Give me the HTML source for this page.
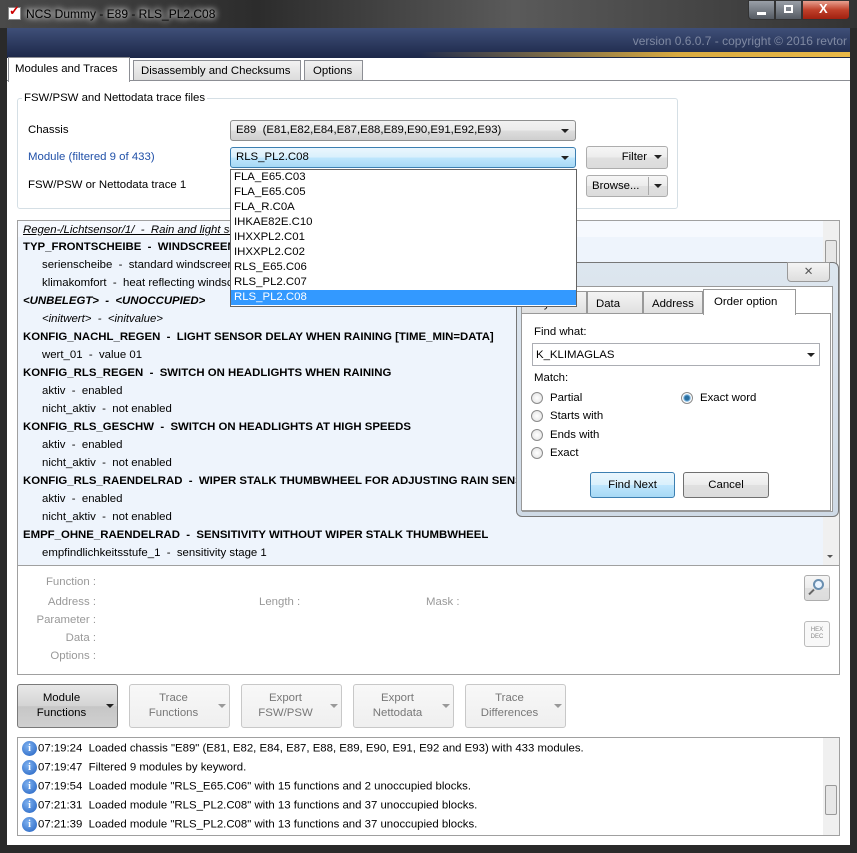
<!DOCTYPE html>
<html><head><meta charset="utf-8"><style>
*{box-sizing:border-box;margin:0;padding:0}
body{width:857px;height:853px;overflow:hidden;background:#2a2a2a;font-family:"Liberation Sans",sans-serif;font-size:11.4px;color:#000;position:relative}
.a{position:absolute}
.t{position:absolute;white-space:nowrap;line-height:14px}
.combo{position:absolute;border:1px solid #8e8f8f;border-radius:3px;background:linear-gradient(#f2f2f2,#ebebeb 50%,#dddddd 51%,#cfcfcf);padding:3px 5px;line-height:12px}
.arr{position:absolute;width:0;height:0;border-left:4px solid transparent;border-right:4px solid transparent;border-top:4px solid #222}
.btn{position:absolute;border:1px solid #adadad;border-radius:3px;background:linear-gradient(#f6f6f6,#ececec 50%,#e0e0e0 51%,#dcdcdc);text-align:center}
.bb{position:absolute;border:1px solid #c8c8c8;border-radius:3px;background:linear-gradient(#f8f8f8,#efefef);color:#777;text-align:center;line-height:15px;padding-top:6px}
.row{position:absolute;left:23px;white-space:nowrap;line-height:14px}
.b{font-weight:bold}
.in{left:42px}
.lbl{position:absolute;color:#999;text-align:right;width:80px;left:16px}
.li{position:absolute;left:4px;line-height:15px}
.rad{position:absolute;width:12px;height:12px;border-radius:50%;border:1px solid #8b8b8b;background:radial-gradient(#fff,#e0e0e0)}
.log{position:absolute;left:22px;white-space:nowrap;line-height:14px}
.ic{display:inline-block;width:15px;height:15px;border-radius:50%;background:radial-gradient(circle at 40% 35%,#7fb2f0,#1f5fc0);color:#fff;font-size:10px;font-weight:bold;text-align:center;line-height:15px;vertical-align:middle;margin-right:1px;font-family:"Liberation Serif",serif}
</style></head><body>
<div class="a" style="left:0;top:0;width:857px;height:28px;background:linear-gradient(90deg,#4a4a4a,#2c2c2c 30%,#5a5a5a 60%,#333)"></div>
<div class="a" style="left:8px;top:7px;width:13px;height:13px;background:#fff;border:1px solid #888"></div>
<div class="t" style="left:9px;top:4px;color:#c00;font-weight:bold;font-size:13px">✓</div>
<div class="t" style="left:26px;top:7px;color:#000;text-shadow:0 0 6px #fff,0 0 8px #fff;font-size:12px">NCS Dummy - E89 - RLS_PL2.C08</div>
<div class="a" style="left:748px;top:0;width:27px;height:20px;border:1px solid #333;border-radius:0 0 0 4px;background:linear-gradient(#9aa0a8,#555b63)"></div>
<div class="a" style="left:757px;top:12px;width:9px;height:3px;background:#fff"></div>
<div class="a" style="left:775px;top:0;width:27px;height:20px;border:1px solid #333;background:linear-gradient(#9aa0a8,#555b63)"></div>
<div class="a" style="left:784px;top:5px;width:9px;height:8px;border:2px solid #fff"></div>
<div class="a" style="left:802px;top:0;width:48px;height:20px;border:1px solid #333;border-radius:0 0 4px 0;background:linear-gradient(#e8a090,#c0402a 50%,#a02010)"></div>
<div class="t" style="left:819px;top:2px;color:#fff;font-weight:bold;font-size:13px">X</div>
<div class="a" style="left:7px;top:28px;width:843px;height:817px;background:#fff"></div>
<div class="a" style="left:7px;top:28px;width:843px;height:30px;background:linear-gradient(#3f4f78,#1c2748)"></div>
<div class="a" style="left:420px;top:52px;width:430px;height:5px;background:linear-gradient(90deg,rgba(200,160,60,0),#d8aa40 60%,#e8b848)"></div>
<div class="t" style="right:10px;top:34px;color:#7f89a2;font-size:12px">version 0.6.0.7 - copyright © 2016 revtor</div>
<div class="a" style="left:7px;top:80px;width:843px;height:1px;background:#8c8e94"></div>
<div class="a" style="left:133px;top:60px;width:168px;height:21px;border:1px solid #8c8e94;background:linear-gradient(#f2f2f2,#dcdcdc)"></div>
<div class="t" style="left:141px;top:64px">Disassembly and Checksums</div>
<div class="a" style="left:304px;top:60px;width:59px;height:21px;border:1px solid #8c8e94;background:linear-gradient(#f2f2f2,#dcdcdc)"></div>
<div class="t" style="left:313px;top:64px">Options</div>
<div class="a" style="left:8px;top:57px;width:122px;height:25px;border:1px solid #8c8e94;border-bottom:none;background:#fff"></div>
<div class="t" style="left:15px;top:62px">Modules and Traces</div>
<div class="a" style="left:17px;top:98px;width:661px;height:111px;border:1px solid #d5dfe5;border-radius:3px"></div>
<div class="t" style="left:22px;top:91px;background:#fff;padding:0 2px">FSW/PSW and Nettodata trace files</div>
<div class="t" style="left:28px;top:123px">Chassis</div>
<div class="combo" style="left:230px;top:120px;width:346px;height:21px">E89&nbsp; (E81,E82,E84,E87,E88,E89,E90,E91,E92,E93)</div>
<div class="arr" style="left:561px;top:129px"></div>
<div class="t" style="left:28px;top:150px;color:#2050a8">Module (filtered 9 of 433)</div>
<div class="combo" style="left:230px;top:147px;width:346px;height:21px;border-color:#3c7fb1;background:linear-gradient(#eaf6fd,#d9f0fc 50%,#bee6fd 51%,#a7d9f5)">RLS_PL2.C08</div>
<div class="arr" style="left:561px;top:156px"></div>
<div class="btn" style="left:586px;top:146px;width:82px;height:23px;line-height:21px;padding-right:20px;text-align:right">Filter</div>
<div class="arr" style="left:654px;top:155px"></div>
<div class="t" style="left:28px;top:178px">FSW/PSW or Nettodata trace 1</div>
<div class="btn" style="left:586px;top:175px;width:82px;height:22px;line-height:20px;text-align:left;padding-left:5px">Browse...</div>
<div class="a" style="left:648px;top:177px;width:1px;height:18px;background:#aaa"></div>
<div class="arr" style="left:654px;top:184px"></div>
<div class="a" style="left:17px;top:220px;width:823px;height:346px;border:1px solid #a0a0a0;background:#eef4fc"></div>
<div class="a" style="left:18px;top:221px;width:805px;height:16px;background:#f6f9fe"></div>
<div class="row" style="top:223px;font-style:italic;text-decoration:underline">Regen-/Lichtsensor/1/&nbsp; -&nbsp; Rain and light sensor</div>
<div class="row b" style="top:240px">TYP_FRONTSCHEIBE&nbsp; -&nbsp; WINDSCREEN TYPE</div>
<div class="row in" style="top:258px">serienscheibe&nbsp; -&nbsp; standard windscreen</div>
<div class="row in" style="top:276px">klimakomfort&nbsp; -&nbsp; heat reflecting windscreen</div>
<div class="row b" style="top:294px;font-style:italic">&lt;UNBELEGT&gt;&nbsp; -&nbsp; &lt;UNOCCUPIED&gt;</div>
<div class="row in" style="top:312px;font-style:italic">&lt;initwert&gt;&nbsp; -&nbsp; &lt;initvalue&gt;</div>
<div class="row b" style="top:330px">KONFIG_NACHL_REGEN&nbsp; -&nbsp; LIGHT SENSOR DELAY WHEN RAINING [TIME_MIN=DATA]</div>
<div class="row in" style="top:348px">wert_01&nbsp; -&nbsp; value 01</div>
<div class="row b" style="top:366px">KONFIG_RLS_REGEN&nbsp; -&nbsp; SWITCH ON HEADLIGHTS WHEN RAINING</div>
<div class="row in" style="top:384px">aktiv&nbsp; -&nbsp; enabled</div>
<div class="row in" style="top:402px">nicht_aktiv&nbsp; -&nbsp; not enabled</div>
<div class="row b" style="top:420px">KONFIG_RLS_GESCHW&nbsp; -&nbsp; SWITCH ON HEADLIGHTS AT HIGH SPEEDS</div>
<div class="row in" style="top:438px">aktiv&nbsp; -&nbsp; enabled</div>
<div class="row in" style="top:456px">nicht_aktiv&nbsp; -&nbsp; not enabled</div>
<div class="row b" style="top:474px">KONFIG_RLS_RAENDELRAD&nbsp; -&nbsp; WIPER STALK THUMBWHEEL FOR ADJUSTING RAIN SENSITIVITY</div>
<div class="row in" style="top:492px">aktiv&nbsp; -&nbsp; enabled</div>
<div class="row in" style="top:510px">nicht_aktiv&nbsp; -&nbsp; not enabled</div>
<div class="row b" style="top:528px">EMPF_OHNE_RAENDELRAD&nbsp; -&nbsp; SENSITIVITY WITHOUT WIPER STALK THUMBWHEEL</div>
<div class="row in" style="top:546px">empfindlichkeitsstufe_1&nbsp; -&nbsp; sensitivity stage 1</div>
<div class="a" style="left:823px;top:221px;width:16px;height:344px;background:#f0f0f0"></div>
<div class="a" style="left:825px;top:240px;width:12px;height:30px;border:1px solid #999;border-radius:2px;background:#e6e6e6"></div>
<div class="arr" style="left:827px;top:555px;border-width:3px 3px 0;border-top-color:#555"></div>
<div class="a" style="left:17px;top:565px;width:823px;height:110px;border:1px solid #a0a0a0;background:#fff"></div>
<div class="lbl t" style="top:575px">Function :</div>
<div class="lbl t" style="top:595px">Address :</div>
<div class="lbl t" style="top:613px">Parameter :</div>
<div class="lbl t" style="top:631px">Data :</div>
<div class="lbl t" style="top:649px">Options :</div>
<div class="t" style="left:259px;top:595px;color:#999">Length :</div>
<div class="t" style="left:426px;top:595px;color:#999">Mask :</div>
<div class="btn" style="left:804px;top:575px;width:26px;height:26px"></div>
<div class="a" style="left:813px;top:579px;width:11px;height:11px;border:2px solid #6a8fb0;border-radius:50%;background:#eaf4ff"></div>
<div class="a" style="left:808px;top:591px;width:7px;height:2px;background:#666;transform:rotate(-45deg)"></div>
<div class="a" style="left:804px;top:621px;width:26px;height:26px;border:1px solid #bbb;border-radius:3px;background:#f8f8f8;font-size:6px;color:#888;text-align:center;line-height:7px;padding-top:5px">HEX<br>DEC</div>
<div class="a" style="left:17px;top:684px;width:101px;height:44px;border:1px solid #7a7a7a;border-radius:3px;background:linear-gradient(#e8e8e8,#d4d4d4 50%,#c6c6c6 51%,#d0d0d0);text-align:center;line-height:15px;padding-top:6px;padding-right:12px">Module<br>Functions</div>
<div class="arr" style="left:106px;top:704px"></div>
<div class="bb" style="left:129px;top:684px;width:101px;height:44px;padding-right:12px">Trace<br>Functions</div>
<div class="arr" style="left:218px;top:704px;border-top-color:#999"></div>
<div class="bb" style="left:241px;top:684px;width:101px;height:44px;padding-right:12px">Export<br>FSW/PSW</div>
<div class="arr" style="left:330px;top:704px;border-top-color:#999"></div>
<div class="bb" style="left:353px;top:684px;width:101px;height:44px;padding-right:12px">Export<br>Nettodata</div>
<div class="arr" style="left:442px;top:704px;border-top-color:#999"></div>
<div class="bb" style="left:465px;top:684px;width:101px;height:44px;padding-right:12px">Trace<br>Differences</div>
<div class="arr" style="left:554px;top:704px;border-top-color:#999"></div>
<div class="a" style="left:17px;top:737px;width:823px;height:99px;border:1px solid #a0a0a0;background:#fff"></div>
<div class="log" style="top:741px"><span class="ic">i</span>07:19:24&nbsp; Loaded chassis "E89" (E81, E82, E84, E87, E88, E89, E90, E91, E92 and E93) with 433 modules.</div>
<div class="log" style="top:760px"><span class="ic">i</span>07:19:47&nbsp; Filtered 9 modules by keyword.</div>
<div class="log" style="top:779px"><span class="ic">i</span>07:19:54&nbsp; Loaded module "RLS_E65.C06" with 15 functions and 2 unoccupied blocks.</div>
<div class="log" style="top:798px"><span class="ic">i</span>07:21:31&nbsp; Loaded module "RLS_PL2.C08" with 13 functions and 37 unoccupied blocks.</div>
<div class="log" style="top:817px"><span class="ic">i</span>07:21:39&nbsp; Loaded module "RLS_PL2.C08" with 13 functions and 37 unoccupied blocks.</div>
<div class="a" style="left:823px;top:738px;width:16px;height:97px;background:#f0f0f0"></div>
<div class="a" style="left:825px;top:785px;width:12px;height:30px;border:1px solid #999;border-radius:2px;background:#e6e6e6"></div>
<div class="a" style="left:516px;top:262px;width:323px;height:255px;border:1px solid #777;border-radius:6px;background:linear-gradient(#dde6ef,#cfdae6);"></div>
<div class="a" style="left:787px;top:262px;width:43px;height:20px;border:1px solid #999;border-radius:0 0 4px 4px;background:linear-gradient(#f4f4f4,#dedede);text-align:center;color:#555;line-height:18px">✕</div>
<div class="a" style="left:522px;top:286px;width:311px;height:226px;background:#fff;border:1px solid #999"></div>
<div class="a" style="left:521px;top:291px;width:66px;height:23px;border:1px solid #999;background:linear-gradient(#f4f4f4,#e0e0e0)"></div>
<div class="t" style="left:530px;top:297px">Keyword</div>
<div class="a" style="left:587px;top:291px;width:56px;height:23px;border:1px solid #999;background:linear-gradient(#f4f4f4,#e0e0e0)"></div>
<div class="t" style="left:596px;top:297px">Data</div>
<div class="a" style="left:643px;top:291px;width:60px;height:23px;border:1px solid #999;background:linear-gradient(#f4f4f4,#e0e0e0)"></div>
<div class="t" style="left:652px;top:297px">Address</div>
<div class="a" style="left:521px;top:313px;width:310px;height:198px;border:1px solid #999;background:#fff"></div>
<div class="a" style="left:703px;top:289px;width:93px;height:26px;border:1px solid #999;border-bottom:none;background:#fff"></div>
<div class="t" style="left:714px;top:295px">Order option</div>
<div class="t" style="left:534px;top:325px">Find what:</div>
<div class="a" style="left:532px;top:343px;width:288px;height:23px;border:1px solid #abadb3;background:#fff;padding:4px 3px;line-height:14px">K_KLIMAGLAS</div>
<div class="arr" style="left:807px;top:353px"></div>
<div class="t" style="left:534px;top:371px">Match:</div>
<div class="rad" style="left:531px;top:392px"></div><div class="t" style="left:550px;top:391px">Partial</div>
<div class="rad" style="left:531px;top:410px"></div><div class="t" style="left:550px;top:409px">Starts with</div>
<div class="rad" style="left:531px;top:429px"></div><div class="t" style="left:550px;top:428px">Ends with</div>
<div class="rad" style="left:531px;top:447px"></div><div class="t" style="left:550px;top:446px">Exact</div>
<div class="rad" style="left:681px;top:392px;background:radial-gradient(#2a6fa0 30%,#7ab4e0 45%,#fff 60%)"></div><div class="t" style="left:700px;top:391px">Exact word</div>
<div class="btn" style="left:590px;top:472px;width:85px;height:26px;line-height:24px;border-color:#3c7fb1;background:linear-gradient(#eaf6fd,#d9f0fc 50%,#bee6fd 51%,#a7d9f5)">Find Next</div>
<div class="btn" style="left:683px;top:472px;width:86px;height:26px;line-height:24px;border-color:#707070">Cancel</div>
<div class="a" style="left:230px;top:169px;width:347px;height:138px;border:1px solid #646464;background:#fff"></div>
<div class="a" style="left:231px;top:290px;width:345px;height:15px;background:#3399ff"></div>
<div class="a" style="left:230px;top:170px;line-height:15px">
<div class="li" style="top:0">FLA_E65.C03</div>
<div class="li" style="top:15px">FLA_E65.C05</div>
<div class="li" style="top:30px">FLA_R.C0A</div>
<div class="li" style="top:45px">IHKAE82E.C10</div>
<div class="li" style="top:60px">IHXXPL2.C01</div>
<div class="li" style="top:75px">IHXXPL2.C02</div>
<div class="li" style="top:90px">RLS_E65.C06</div>
<div class="li" style="top:105px">RLS_PL2.C07</div>
<div class="li" style="top:120px;color:#fff">RLS_PL2.C08</div>
</div>
</body></html>
